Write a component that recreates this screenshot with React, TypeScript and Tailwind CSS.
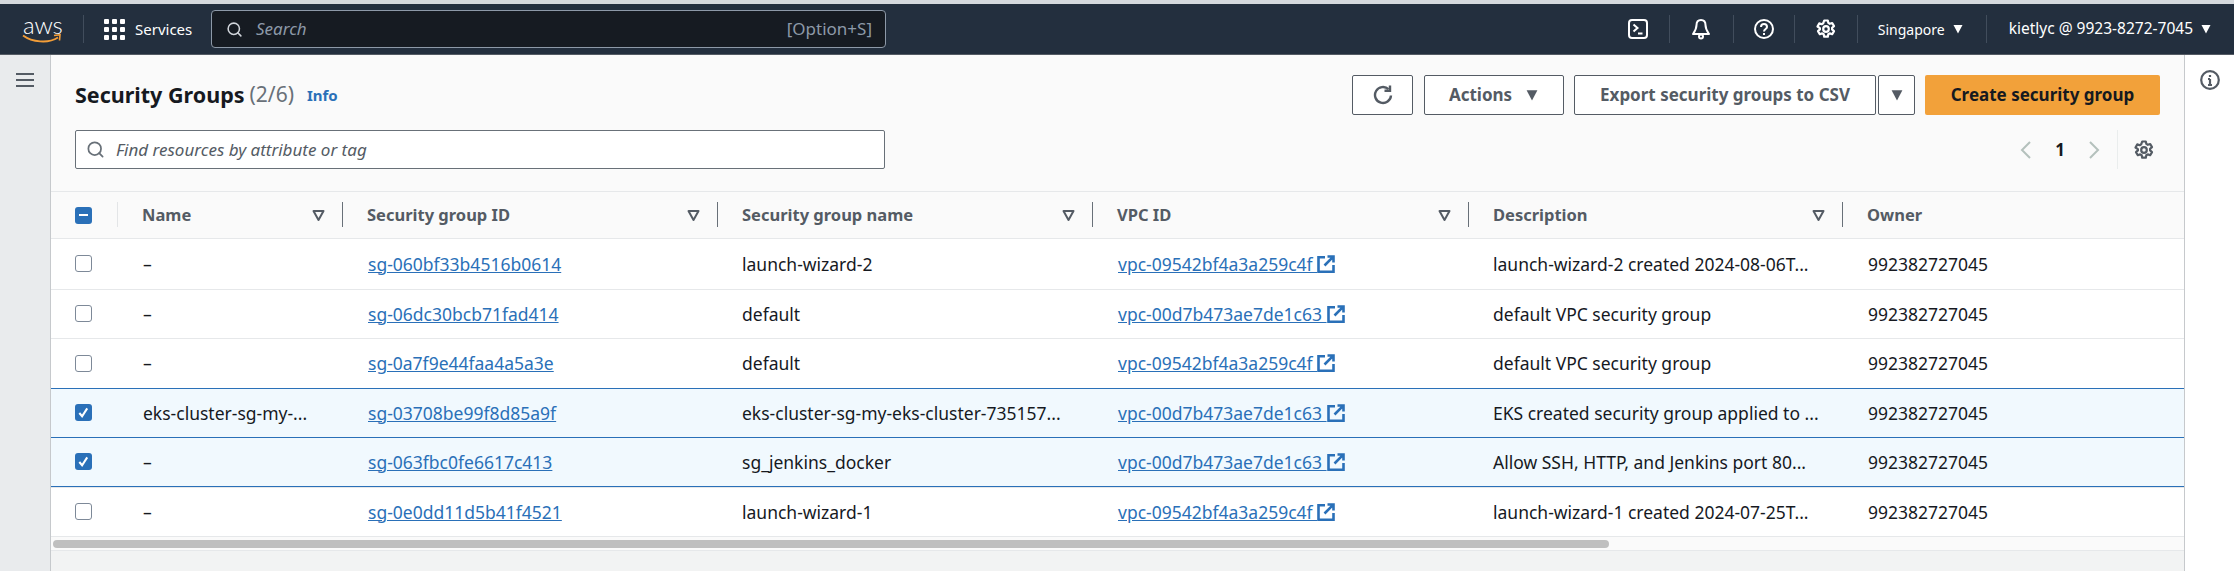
import { Search } from "lucide-react";

const font = "font-['Noto_Sans',sans-serif]";

const rows = [
  { name: "–", id: "sg-060bf33b4516b0614", group: "launch-wizard-2", vpc: "vpc-09542bf4a3a259c4f", desc: "launch-wizard-2 created 2024-08-06T...", owner: "992382727045", on: false },
  { name: "–", id: "sg-06dc30bcb71fad414", group: "default", vpc: "vpc-00d7b473ae7de1c63", desc: "default VPC security group", owner: "992382727045", on: false },
  { name: "–", id: "sg-0a7f9e44faa4a5a3e", group: "default", vpc: "vpc-09542bf4a3a259c4f", desc: "default VPC security group", owner: "992382727045", on: false },
  { name: "eks-cluster-sg-my-...", id: "sg-03708be99f8d85a9f", group: "eks-cluster-sg-my-eks-cluster-735157...", vpc: "vpc-00d7b473ae7de1c63", desc: "EKS created security group applied to ...", owner: "992382727045", on: true },
  { name: "–", id: "sg-063fbc0fe6617c413", group: "sg_jenkins_docker", vpc: "vpc-00d7b473ae7de1c63", desc: "Allow SSH, HTTP, and Jenkins port 80...", owner: "992382727045", on: true },
  { name: "–", id: "sg-0e0dd11d5b41f4521", group: "launch-wizard-1", vpc: "vpc-09542bf4a3a259c4f", desc: "launch-wizard-1 created 2024-07-25T...", owner: "992382727045", on: false },
];

const cols = "grid grid-cols-[67px_225px_375px_375px_376px_374px_1fr]";

function Gear({ className }: { className: string }) {
  return (
    <svg className={className} viewBox="0 0 20 20" fill="none" stroke="currentColor" strokeWidth="2.200" strokeLinejoin="round">
      <circle cx="10" cy="10" r="2.800" />
      <path d="M8.200 1.500h3.600l.5 2.400 1.500.9 2.400-.8 1.800 3.100-1.900 1.700v1.600l1.900 1.700-1.800 3.100-2.400-.8-1.500.9-.5 2.400H8.200l-.5-2.400-1.500-.9-2.400.8-1.800-3.100 1.900-1.700V9.200L1.500 7.500l1.800-3.100 2.400.8 1.500-.9z" />
    </svg>
  );
}

function Caret({ className }: { className: string }) {
  return (
    <svg className={className} viewBox="0 0 10 10" fill="currentColor">
      <path d="M0.500 1h9L5 9.500z" />
    </svg>
  );
}

function SortIcon() {
  return (
    <svg className="w-[13px] h-[13px] text-[#545b64]" viewBox="0 0 13 13" fill="none" stroke="currentColor" strokeWidth="2">
      <path d="M1.500 2h10L6.500 11z" strokeLinejoin="round" />
    </svg>
  );
}

function External() {
  return (
    <svg className="w-[18px] h-[18px] shrink-0 text-[#2a70b8]" viewBox="0 0 18 18" fill="none" stroke="currentColor" strokeWidth="2.600">
      <path d="M8 2.300H1.500v14.400h15V10" />
      <path d="M10.500 1.500h6v6M16.300 1.700 7.500 10.500" />
    </svg>
  );
}

function Checkbox({ on }: { on: boolean }) {
  if (on) {
    return (
      <span className="w-[17px] h-[17px] rounded-[3px] bg-[#2a70b8] flex items-center justify-center">
        <svg className="w-[13px] h-[13px]" viewBox="0 0 14 14" fill="none" stroke="white" strokeWidth="2.200">
          <path d="M2.500 7.500 5.500 11 11 2.500" />
        </svg>
      </span>
    );
  }
  return <span className="w-[17px] h-[17px] rounded-[3px] bg-white border border-[#7d8998]" />;
}

function NavDivider() {
  return <span className="w-px h-[28px] bg-[#414d5c]" />;
}

function HeadCell({ label, sort = true, bar = true }: { label: string; sort?: boolean; bar?: boolean }) {
  return (
    <div className="flex items-center h-full relative pl-[24px] pr-[18px]">
      <span className="text-[16.500px] font-bold text-[#545b64]">{label}</span>
      {sort && <span className="ml-auto flex"><SortIcon /></span>}
      {bar && <span className="absolute right-0 top-[10px] h-[25px] w-px bg-[#687078]" />}
    </div>
  );
}

export default function App() {
  return (
    <div className={`h-[571px] w-[2234px] flex flex-col overflow-hidden bg-white ${font} text-[#16191f]`}>
      <div className="h-[4px] bg-[#d5d9dd]" />

      {/* Top navigation */}
      <nav className="h-[51px] shrink-0 bg-[#232f3e] border-b border-[#545b64] flex items-center text-white">
        <div className="w-[83px] pl-[23px] flex flex-col items-start shrink-0">
          <span className="font-['Lato',sans-serif] font-light text-[24px] leading-[20px] tracking-[-0.2px]">aws</span>
          <svg className="w-[40px] h-[10px] -mt-[1px] -ml-[1px]" viewBox="0 0 40 10" fill="none">
            <path d="M1 1.500C10 8 26 10 36 3.500" stroke="#f29d38" strokeWidth="2" />
            <path d="M32 1.500 38 .8 37.500 6.500" stroke="#f29d38" strokeWidth="1.600" />
          </svg>
        </div>
        <span className="w-px h-[28px] bg-[#414d5c]" />
        <div className="ml-[20px] grid grid-cols-3 gap-[3px] w-[21px] shrink-0">
          {Array.from({ length: 9 }).map((_, i) => (
            <span key={i} className="w-[5px] h-[5px] rounded-[1px] bg-white" />
          ))}
        </div>
        <span className="ml-[10px] text-[15px] w-[76px] shrink-0">Services</span>
        <div className="w-[675px] h-[38px] rounded-[4px] border border-[#8d99a8] bg-[#161b22] flex items-center pl-[14px] pr-[13px]">
          <Search className="w-[17px] h-[17px] text-[#d1d5db]" strokeWidth={2.2} />
          <span className="ml-[13px] italic text-[17px] text-[#8d99a8]">Search</span>
          <span className="ml-auto text-[17px] text-[#8d99a8]">[Option+S]</span>
        </div>

        <div className="ml-auto flex items-center">
          <div className="w-[62px] flex justify-center">
            <svg className="w-[20px] h-[20px]" viewBox="0 0 20 20" fill="none" stroke="white" strokeWidth="2">
              <rect x="1" y="1" width="18" height="18" rx="3" />
              <path d="M5.500 5.500 9.500 9l-4 3.500M10 14.500h4.500" />
            </svg>
          </div>
          <NavDivider />
          <div className="w-[63px] flex justify-center">
            <svg className="w-[20px] h-[22px]" viewBox="0 0 20 22" fill="none" stroke="white" strokeWidth="2" strokeLinejoin="round">
              <path d="M10 2C7 2 5.500 4.200 5.500 7c0 4-1.500 6-3.500 9h16c-2-3-3.500-5-3.500-9C14.500 4.200 13 2 10 2z" />
              <circle cx="10" cy="18.500" r="2" />
            </svg>
          </div>
          <NavDivider />
          <div className="w-[60px] flex justify-center">
            <svg className="w-[20px] h-[20px]" viewBox="0 0 20 20" fill="none" stroke="white" strokeWidth="2">
              <circle cx="10" cy="10" r="9" />
              <path d="M7 8c0-4 6-4 6 0 0 2-3 2-3 4.500" />
              <path d="M10 14v2" />
            </svg>
          </div>
          <NavDivider />
          <div className="w-[62px] flex justify-center">
            <Gear className="w-[20px] h-[20px] text-white" />
          </div>
          <NavDivider />
          <span className="ml-[20px] text-[14px]">Singapore</span>
          <Caret className="ml-[8px] w-[10px] h-[10px] text-white" />
          <span className="ml-[23px] flex"><NavDivider /></span>
          <span className="ml-[22px] text-[15.500px]">kietlyc @ 9923-8272-7045</span>
          <Caret className="ml-[8px] mr-[23px] w-[10px] h-[10px] text-white" />
        </div>
      </nav>

      <div className="flex-1 flex min-h-0">
        {/* Left rail */}
        <aside className="w-[51px] shrink-0 bg-[#e9ebed] border-r border-[#c6c9cc] flex justify-center pt-[17px]">
          <svg className="w-[18px] h-[16px] text-[#545b64]" viewBox="0 0 18 16" fill="none" stroke="currentColor" strokeWidth="2">
            <path d="M0 2h18M0 8h18M0 14h18" />
          </svg>
        </aside>

        {/* Main */}
        <main className="flex-1 min-w-0 bg-[#fafafa] flex flex-col">
          <div className="px-[24px] pt-[20px] flex items-center">
            <h1 className="text-[21.500px] font-bold">Security Groups</h1>
            <span className="ml-[5px] text-[21px] text-[#687078]">(2/6)</span>
            <a className="ml-[13px] text-[15px] font-bold text-[#2a70b8]">Info</a>
            <div className="ml-auto flex items-center">
              <button className="w-[61px] h-[40px] rounded-[2px] bg-white border border-[#545b64] flex items-center justify-center text-[#545b64]">
                <svg className="w-[20px] h-[20px]" viewBox="0 0 20 20" fill="none" stroke="currentColor" strokeWidth="2.400">
                  <path d="M18 10.500a8 8 0 1 1-2.500-6.300" />
                  <path d="M17 .5v5.200h-5.500" />
                </svg>
              </button>
              <button className="ml-[11px] w-[140px] h-[40px] rounded-[2px] bg-white border border-[#545b64] flex items-center justify-center text-[17px] font-bold text-[#545b64]">
                Actions
                <Caret className="ml-[13px] w-[14px] h-[12px] text-[#545b64]" />
              </button>
              <button className="ml-[10px] w-[302px] h-[40px] rounded-[2px] bg-white border border-[#545b64] text-[17px] font-bold text-[#545b64]">
                Export security groups to CSV
              </button>
              <button className="ml-[2px] w-[37px] h-[40px] rounded-[2px] bg-white border border-[#545b64] flex items-center justify-center">
                <Caret className="w-[14px] h-[12px] text-[#545b64]" />
              </button>
              <button className="ml-[10px] w-[235px] h-[40px] rounded-[2px] bg-[#f2a13a] text-[17px] font-bold text-[#16191f]">
                Create security group
              </button>
            </div>
          </div>

          <div className="px-[24px] mt-[15px] flex items-center">
            <div className="w-[810px] h-[39px] rounded-[2px] bg-white border border-[#687078] flex items-center pl-[10px]">
              <Search className="w-[19px] h-[19px] text-[#687078]" strokeWidth={2.2} />
              <span className="ml-[11px] italic text-[17px] text-[#545b64]">Find resources by attribute or tag</span>
            </div>
            <div className="ml-auto flex items-center h-[39px]">
              <svg className="w-[11px] h-[18px] text-[#b4c0bc]" viewBox="0 0 11 18" fill="none" stroke="currentColor" strokeWidth="2">
                <path d="M10 1 2 9l8 8" />
              </svg>
              <span className="w-[58px] text-center text-[17px] font-bold">1</span>
              <svg className="w-[11px] h-[18px] text-[#b4c0bc]" viewBox="0 0 11 18" fill="none" stroke="currentColor" strokeWidth="2">
                <path d="M1 1l8 8-8 8" />
              </svg>
              <span className="ml-[17px] w-px h-[39px] bg-[#eaeded]" />
              <Gear className="ml-[16px] mr-[6px] w-[20px] h-[20px] text-[#545b64]" />
            </div>
          </div>

          {/* Table */}
          <div className="mt-[22px] bg-white">
            <div className={`${cols} h-[48px] bg-[#fafafa] border-y border-[#e6e8ea]`}>
              <div className="relative flex items-center pl-[24px]">
                <span className="w-[17px] h-[17px] rounded-[3px] bg-[#2a70b8] flex items-center justify-center">
                  <span className="w-[9px] h-[2px] bg-white" />
                </span>
                <span className="absolute right-0 top-[10px] h-[25px] w-px bg-[#e3e5e7]" />
              </div>
              <HeadCell label="Name" />
              <HeadCell label="Security group ID" />
              <HeadCell label="Security group name" />
              <HeadCell label="VPC ID" />
              <HeadCell label="Description" />
              <HeadCell label="Owner" sort={false} bar={false} />
            </div>
            {rows.map((r, i) => (
              <div
                key={r.id}
                className={`${cols} h-[49.500px] items-center text-[17.500px] ${
                  r.on ? "bg-[#f1f9fe] border-t border-[#2a70b8]" : i === 0 ? "" : "border-t border-[#e6e8ea]"
                } ${i === 4 ? "border-b border-[#2a70b8]" : ""}`}
              >
                <div className="flex pl-[24px]"><Checkbox on={r.on} /></div>
                <div className="pl-[25px] whitespace-nowrap">{r.name}</div>
                <div className="pl-[25px]"><a className="text-[#2a70b8] underline">{r.id}</a></div>
                <div className="pl-[24px] whitespace-nowrap">{r.group}</div>
                <div className="pl-[25px] flex items-center">
                  <a className="text-[#2a70b8] underline whitespace-pre">{r.vpc + " "}</a>
                  <External />
                </div>
                <div className="pl-[24px] whitespace-nowrap">{r.desc}</div>
                <div className="pl-[25px]">{r.owner}</div>
              </div>
            ))}
          </div>

          {/* Scrollbar */}
          <div className="h-[15px] bg-[#fafafa] border-y border-[#e6e8ea] flex items-center pl-[2px]">
            <span className="w-[1556px] h-[8px] rounded-full bg-[#bfbfbf]" />
          </div>
          <div className="flex-1 bg-[#f2f3f3]" />
        </main>

        {/* Right rail */}
        <aside className="w-[50px] shrink-0 bg-white border-l border-[#c6c9cc] flex justify-center pt-[15px]">
          <svg className="w-[20px] h-[20px] text-[#545b64]" viewBox="0 0 20 20" fill="none" stroke="currentColor" strokeWidth="2.200">
            <circle cx="10" cy="10" r="8.800" />
            <path d="M10 9v6M10 5v2M8 9h2M8 15h4" />
          </svg>
        </aside>
      </div>
    </div>
  );
}
